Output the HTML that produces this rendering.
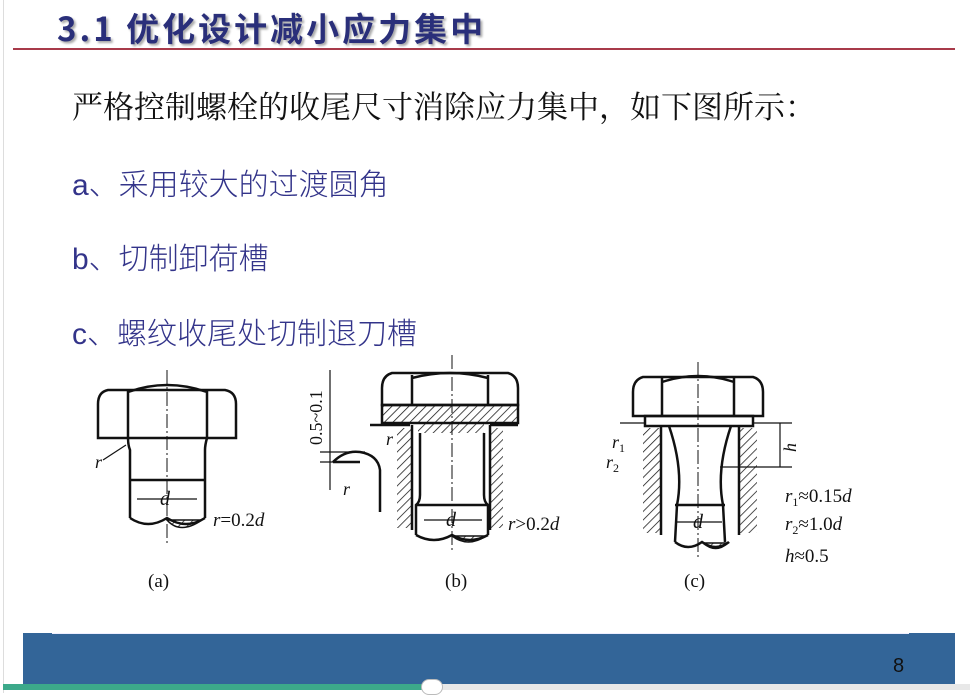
<!DOCTYPE html>
<html><head><meta charset="utf-8"><style>
body{margin:0;width:970px;height:693px;background:#fff;position:relative;overflow:hidden;font-family:"Liberation Sans","Noto Sans CJK SC",sans-serif}
.t{position:absolute;white-space:nowrap}
</style></head><body>
<div style="position:absolute;left:3px;top:0;width:1px;height:693px;background:#ddd"></div>
<div class="t" style="left:57px;top:3px;font-size:33px;font-weight:bold;letter-spacing:3px;color:#2a2f7a;text-shadow:2px 2px 2px #aaa;font-family:'Noto Sans CJK SC',sans-serif">3.1 优化设计减小应力集中</div>
<div style="position:absolute;left:13px;top:48px;width:942px;height:2px;background:#a83a4a"></div>
<div class="t" style="left:72px;top:82px;font-size:31px;color:#111;font-family:'Liberation Serif','Noto Serif CJK SC',serif">严格控制螺栓的收尾尺寸消除应力集中，如下图所示：</div>
<div class="t" style="left:72px;top:160px;font-size:30px;color:#33348a;font-weight:300">a、采用较大的过渡圆角</div>
<div class="t" style="left:72px;top:234px;font-size:30px;color:#33348a;font-weight:300">b、切制卸荷槽</div>
<div class="t" style="left:72px;top:309px;font-size:30px;color:#33348a;font-weight:300">c、螺纹收尾处切制退刀槽</div>

<svg width="970" height="693" style="position:absolute;left:0;top:0" fill="none" stroke="#111" stroke-width="2.5" font-family="Liberation Serif,serif">
<defs><pattern id="h" width="6" height="6" patternUnits="userSpaceOnUse" patternTransform="rotate(45)"><line x1="0" y1="0" x2="0" y2="6" stroke="#111" stroke-width="1.5"/></pattern></defs>
<!-- fig a -->
<path d="M108 390 L225 390 Q236 392 236 404 L236 438 L98 438 L98 404 Q98 392 108 390Z"/>
<path d="M128 390 L128 438 M207 390 L207 438 M128 392 Q167 378 207 392"/>
<path d="M128 438 Q128 445 130 450 L130 518 M207 438 Q205 445 205 450 L205 518 M130 480 L205 480"/>
<path d="M130 518 Q148 530 167 518 Q186 530 205 518" />
<path d="M167 520 Q180 535 202 520 Z" fill="url(#h)" stroke-width="1.5"/>
<line x1="167" y1="370" x2="167" y2="545" stroke-width="1" stroke-dasharray="14 3 2 3"/>
<path d="M137 499 L197 499" stroke-width="1.2"/>
<text x="95" y="468" font-size="18" font-style="italic" fill="#111" stroke="none">r</text>
<line x1="103" y1="460" x2="126" y2="445" stroke-width="1.2"/>
<text x="160" y="505" font-size="20" font-style="italic" fill="#111" stroke="none">d</text>
<text x="213" y="526" font-size="19" fill="#111" stroke="none"><tspan font-style="italic">r</tspan>=0.2<tspan font-style="italic">d</tspan></text>
<text x="148" y="587" font-size="19" fill="#111" stroke="none">(a)</text>
<!-- fig b -->
<path d="M392 373 L508 373 Q518 376 518 388 L518 405 L382 405 L382 388 Q382 376 392 373Z"/>
<path d="M412 375 L412 405 M488 375 L488 405 M412 378 Q450 368 488 378"/>
<rect x="382" y="405" width="136" height="18" fill="url(#h)"/>
<rect x="418" y="423" width="66" height="10" fill="url(#h)" stroke="none"/>
<path d="M370 425 L410 425 M490 425 L518 425"/>
<rect x="397" y="428" width="14" height="100" fill="url(#h)" stroke="none"/>
<rect x="491" y="428" width="12" height="100" fill="url(#h)" stroke="none"/>
<path d="M412 425 L412 530 M490 425 L490 530"/>
<path d="M420 433 L420 495 Q420 502 416 505 L416 535 M484 433 L484 495 Q484 502 488 505 L488 535 M416 505 L488 505"/>
<path d="M416 535 Q434 545 452 535 Q470 545 488 535"/>
<path d="M452 536 Q468 548 486 536Z" fill="url(#h)" stroke-width="1.5"/>
<line x1="452" y1="355" x2="452" y2="552" stroke-width="1" stroke-dasharray="14 3 2 3"/>
<path d="M424 520 L482 520" stroke-width="1.2"/>
<text x="446" y="526" font-size="20" font-style="italic" fill="#111" stroke="none">d</text>
<text x="508" y="530" font-size="19" fill="#111" stroke="none"><tspan font-style="italic">r</tspan>&gt;0.2<tspan font-style="italic">d</tspan></text>
<text x="445" y="587" font-size="19" fill="#111" stroke="none">(b)</text>
<text x="0" y="0" font-size="18" fill="#111" stroke="none" transform="translate(322 445) rotate(-90)">0.5~0.1</text>
<path d="M330 370 L330 490 M320 452 L365 452 M320 462 L345 462" stroke-width="1.2"/>
<path d="M333 462 Q345 450 360 452 Q378 455 380 470 L380 512 M333 462 L360 462" />
<text x="343" y="495" font-size="18" font-style="italic" fill="#111" stroke="none">r</text>
<text x="386" y="445" font-size="18" font-style="italic" fill="#111" stroke="none">r</text>
<!-- fig c -->
<path d="M643 377 L753 377 Q763 380 763 392 L763 416 L633 416 L633 392 Q633 380 643 377Z"/>
<path d="M662 378 L662 416 M734 378 L734 416 M662 382 Q698 370 734 382"/>
<rect x="645" y="416" width="108" height="10"/>
<path d="M620 423 L645 423 M753 423 L792 423 M720 467 L792 467 M780 423 L780 467" stroke-width="1.2"/>
<rect x="643" y="428" width="17" height="105" fill="url(#h)" stroke="none"/>
<rect x="740" y="428" width="17" height="105" fill="url(#h)" stroke="none"/>
<path d="M661 426 L661 535 M739 426 L739 535"/>
<path d="M669 426 Q684 470 677 505 L675 542 M731 426 Q716 470 723 505 L725 542 M675 505 L725 505"/>
<path d="M675 542 Q688 552 702 542 Q716 552 729 542"/>
<path d="M703 543 Q716 554 728 543Z" fill="url(#h)" stroke-width="1.5"/>
<line x1="698" y1="362" x2="698" y2="560" stroke-width="1" stroke-dasharray="14 3 2 3"/>
<path d="M676 522 L722 522" stroke-width="1.2"/>
<text x="693" y="528" font-size="20" font-style="italic" fill="#111" stroke="none">d</text>
<text x="612" y="448" font-size="18" font-style="italic" fill="#111" stroke="none">r<tspan font-size="12" dy="4" font-style="normal">1</tspan></text>
<text x="606" y="468" font-size="18" font-style="italic" fill="#111" stroke="none">r<tspan font-size="12" dy="4" font-style="normal">2</tspan></text>
<text x="0" y="0" font-size="18" font-style="italic" fill="#111" stroke="none" transform="translate(796 452) rotate(-90)">h</text>
<text x="785" y="502" font-size="19" fill="#111" stroke="none"><tspan font-style="italic">r</tspan><tspan font-size="12" dy="4">1</tspan><tspan dy="-4">≈0.15</tspan><tspan font-style="italic">d</tspan></text>
<text x="785" y="530" font-size="19" fill="#111" stroke="none"><tspan font-style="italic">r</tspan><tspan font-size="12" dy="4">2</tspan><tspan dy="-4">≈1.0</tspan><tspan font-style="italic">d</tspan></text>
<text x="785" y="562" font-size="19" fill="#111" stroke="none"><tspan font-style="italic">h</tspan>≈0.5</text>
<text x="684" y="587" font-size="19" fill="#111" stroke="none">(c)</text>
</svg>

<div style="position:absolute;left:23px;top:633px;width:932px;height:51px;background:#336598"></div>
<div style="position:absolute;left:52px;top:633px;width:857px;height:1px;background:#eef"></div>
<div class="t" style="left:893px;top:655px;font-size:20px;color:#111">8</div>
<div style="position:absolute;left:3px;top:684px;width:420px;height:6px;background:#3ca98a"></div>
<div style="position:absolute;left:423px;top:684px;width:547px;height:6px;background:#e8e8e8"></div>
<div style="position:absolute;left:421px;top:679px;width:20px;height:14px;background:#fff;border:1px solid #bbb;border-radius:8px"></div>
</body></html>
